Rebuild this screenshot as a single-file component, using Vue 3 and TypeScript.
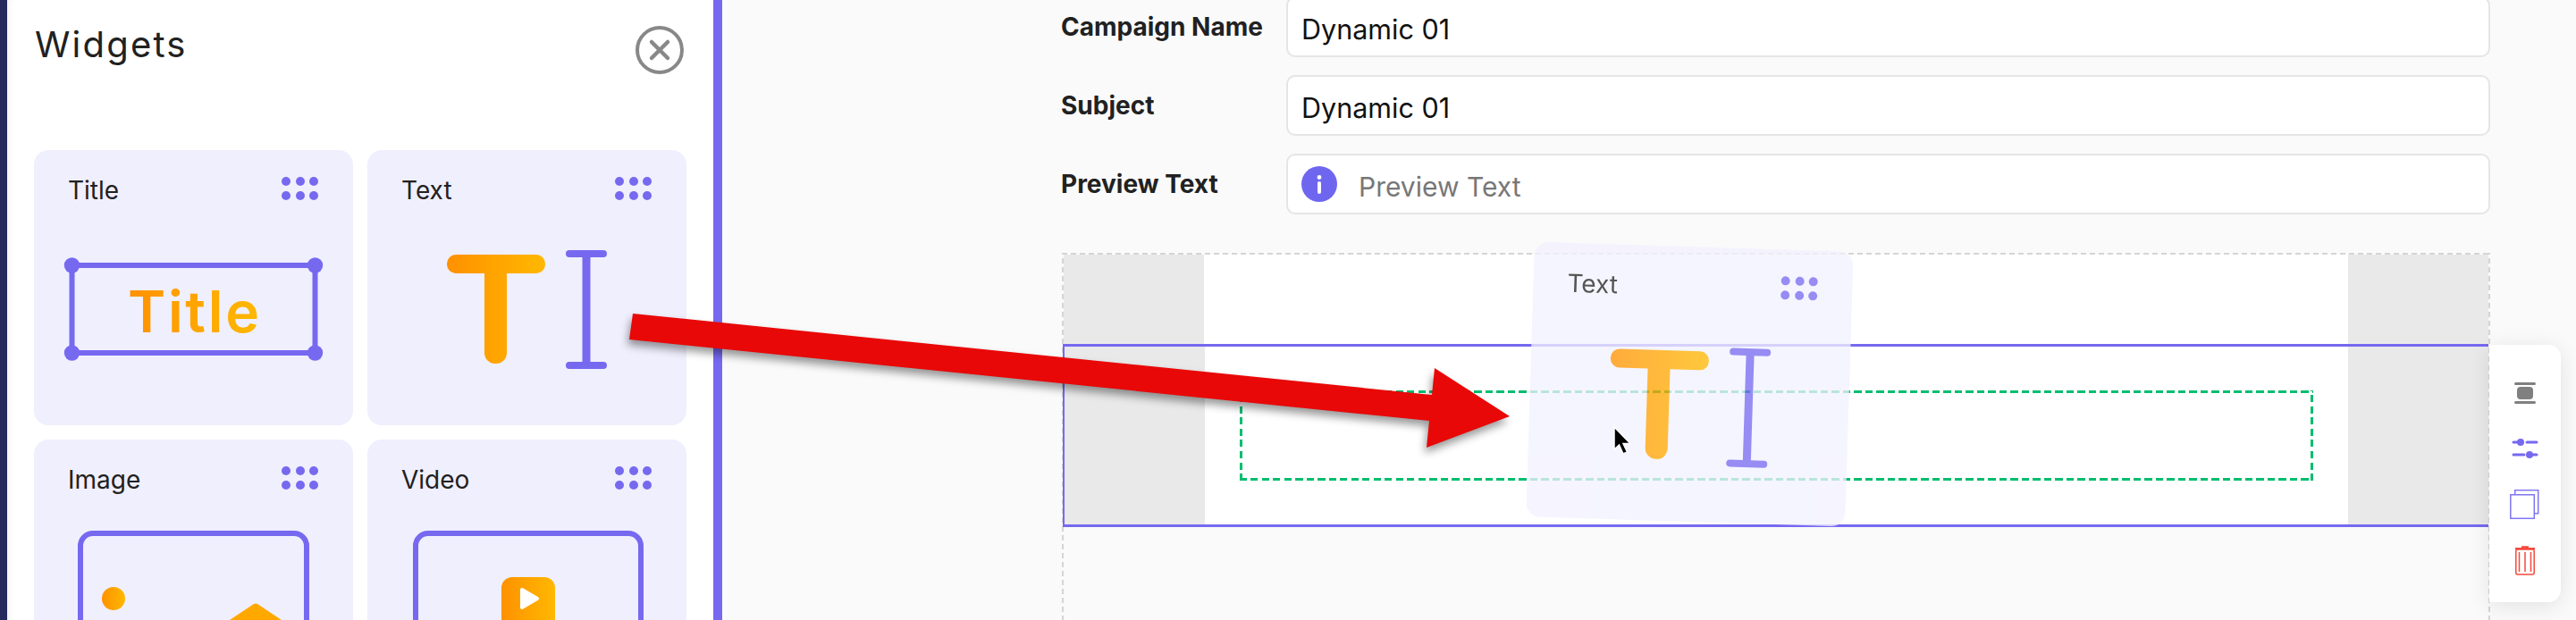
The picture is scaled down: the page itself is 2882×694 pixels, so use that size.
<script setup lang="ts">
interface Widget { name: string; icon: string }
const widgets: Widget[] = [
  { name: 'Title', icon: '#w-title' },
  { name: 'Text', icon: '#w-text' },
  { name: 'Image', icon: '#w-image' },
  { name: 'Video', icon: '#w-video' },
]
const dots = [1, 2, 3, 4, 5, 6]
</script>

<template>
  <div class="page">
    <svg class="defs" width="0" height="0" aria-hidden="true">
      <defs>
        <linearGradient id="orange" x1="0" y1="0" x2="1" y2="0">
          <stop offset="0" stop-color="#ff9100" />
          <stop offset="1" stop-color="#ffb800" />
        </linearGradient>
        <linearGradient id="orange-title" gradientUnits="userSpaceOnUse" x1="105" y1="0" x2="252" y2="0">
          <stop offset="0" stop-color="#ff9100" />
          <stop offset="1" stop-color="#ffb800" />
        </linearGradient>
        <linearGradient id="orange-t" gradientUnits="userSpaceOnUse" x1="89" y1="0" x2="199" y2="0">
          <stop offset="0" stop-color="#ff9100" />
          <stop offset="1" stop-color="#ffb800" />
        </linearGradient>
        <symbol id="w-title" viewBox="0 100 357 208" overflow="visible">
          <rect x="42.500" y="129" width="272" height="98" fill="none" stroke="#7669f0" stroke-width="6" />
          <circle cx="42.500" cy="129" r="8.700" fill="#7669f0" />
          <circle cx="314.500" cy="129" r="8.700" fill="#7669f0" />
          <circle cx="42.500" cy="227" r="8.700" fill="#7669f0" />
          <circle cx="314.500" cy="227" r="8.700" fill="#7669f0" />
          <text x="105" y="204" class="title-art" fill="url(#orange-title)" textLength="147" lengthAdjust="spacing">Title</text>
        </symbol>
        <symbol id="w-text" viewBox="0 100 357 208" overflow="visible">
          <rect x="89" y="117" width="110" height="21" rx="10" fill="url(#orange-t)" />
          <rect x="131" y="117" width="25" height="122" rx="12" fill="url(#orange-t)" />
          <rect x="222" y="112" width="46" height="8" rx="4" fill="#7669f0" />
          <rect x="240.500" y="114" width="9" height="128" fill="#7669f0" />
          <rect x="222" y="237" width="46" height="8" rx="4" fill="#7669f0" />
        </symbol>
        <symbol id="w-image" viewBox="0 100 357 208" overflow="visible">
          <rect x="52" y="105" width="253" height="190" rx="14" fill="none" stroke="#7669f0" stroke-width="6" />
          <circle cx="89" cy="178" r="13" fill="url(#orange)" />
          <path d="M243 186 Q248 181 253 186 L292 212 H204 Z" fill="#ffa800" />
        </symbol>
        <symbol id="w-video" viewBox="0 100 357 208" overflow="visible">
          <rect x="54" y="105" width="252" height="190" rx="14" fill="none" stroke="#7669f0" stroke-width="6" />
          <rect x="150" y="154" width="60" height="60" rx="12" fill="url(#orange)" />
          <path d="M173 168 L190 178 L173 188 Z" fill="#fff" stroke="#fff" stroke-width="4" stroke-linejoin="round" />
        </symbol>
      </defs>
    </svg>

    <div class="rail"></div>

    <aside class="sidebar">
      <header class="sidebar-head">
        <h2>Widgets</h2>
        <svg class="close" viewBox="0 0 54 54" width="54" height="54">
          <circle cx="27" cy="27" r="25" fill="none" stroke="#888" stroke-width="4" />
          <path d="M18 18 L36 36 M36 18 L18 36" stroke="#888" stroke-width="4.500" stroke-linecap="round" />
        </svg>
      </header>
      <div class="grid">
        <article v-for="w in widgets" :key="w.name" class="card">
          <div class="card-head">
            <span>{{ w.name }}</span>
            <div class="dots"><i v-for="d in dots" :key="d"></i></div>
          </div>
          <svg class="art" viewBox="0 100 357 208"><use :href="w.icon" x="0" y="100" width="357" height="208" /></svg>
        </article>
      </div>
    </aside>

    <main class="main">
      <form class="form" @submit.prevent>
        <label class="row">
          <span class="label">Campaign Name</span>
          <span class="field"><input value="Dynamic 01" /></span>
        </label>
        <label class="row">
          <span class="label">Subject</span>
          <span class="field"><input value="Dynamic 01" /></span>
        </label>
        <label class="row">
          <span class="label">Preview Text</span>
          <span class="field">
            <svg class="info" viewBox="0 0 40 40" width="40" height="40">
              <circle cx="20" cy="20" r="20" fill="#6f66f0" />
              <circle cx="20" cy="12.500" r="2.400" fill="#fff" />
              <rect x="18" y="17" width="4" height="14" rx="2" fill="#fff" />
            </svg>
            <input placeholder="Preview Text" />
          </span>
        </label>
      </form>

      <section class="canvas">
        <div class="band">
          <div class="side"></div>
          <div class="mid"></div>
          <div class="side"></div>
        </div>
        <div class="selected">
          <div class="side"></div>
          <div class="mid pad"><div class="drop"></div></div>
          <div class="side"></div>
          <div class="tools">
            <svg class="t1" viewBox="0 0 30 26" width="30" height="26">
              <rect x="3" y="0" width="24" height="3" rx="1.500" fill="#808080" />
              <rect x="6" y="5" width="18" height="14" rx="4" fill="#808080" />
              <rect x="3" y="21" width="24" height="3" rx="1.500" fill="#808080" />
            </svg>
            <svg class="t2" viewBox="0 0 30 26" width="30" height="26">
              <path d="M2 6 H9 M17 6 H28 M2 20 H14 M24 20 H28" stroke="#7669f0" stroke-width="3" stroke-linecap="round" />
              <circle cx="10" cy="6" r="4" fill="#7669f0" />
              <circle cx="20" cy="20" r="4" fill="#7669f0" />
            </svg>
            <svg class="t3" viewBox="0 0 34 34" width="34" height="34">
              <rect x="5.700" y="0.700" width="26" height="26" fill="#fff" stroke="#7f75f2" stroke-width="1.500" />
              <rect x="0.800" y="5.800" width="26.500" height="26.500" fill="#fff" stroke="#7f75f2" stroke-width="1.500" />
            </svg>
            <svg class="t4" viewBox="0 0 24 34" width="24" height="34">
              <path d="M1 3 H23 M8 1.200 H16" stroke="#f44a3f" stroke-width="1.800" />
              <rect x="1.800" y="4" width="20.400" height="28" rx="2" fill="none" stroke="#f44a3f" stroke-width="1.500" />
              <path d="M5.500 7 V29 M12 7 V29 M18.500 7 V29" stroke="#f44a3f" stroke-width="1.500" />
            </svg>
          </div>
        </div>
      </section>
    </main>

    <article class="card ghost">
      <div class="card-head">
        <span>Text</span>
        <div class="dots"><i v-for="d in dots" :key="d"></i></div>
      </div>
      <svg class="art" viewBox="0 100 357 208"><use href="#w-text" x="0" y="100" width="357" height="208" /></svg>
    </article>

    <svg class="overlay" viewBox="0 0 2882 694" width="2882" height="694">
      <polygon class="arrow" points="708,351 1602,442 1605,412 1689,466 1596,501 1599,471 704,380" />
      <path d="M1806 478 V503 L1811.500 498 L1816 508 L1820.500 506 L1816 496.500 L1824 496.500 Z" fill="#000" stroke="#fff" stroke-width="1.500" />
    </svg>
  </div>
</template>

<style>
html, body { margin: 0; background: #fafafa; }
</style>

<style scoped>
.page {
  position: relative;
  display: flex;
  width: 2882px;
  height: 694px;
  overflow: hidden;
  background: #fafafa;
  font-family: Inter, "Liberation Sans", sans-serif;
  color: #212121;
}
.defs { position: absolute; }
.rail { flex: 0 0 8px; background: #252b5c; }
.sidebar {
  flex: 0 0 790px;
  background: #fff;
  border-right: 10px solid #7669f0;
  box-shadow: inset 8px 0 8px -6px rgba(0, 0, 0, 0.05);
}
.sidebar-head {
  display: flex;
  justify-content: space-between;
  align-items: flex-start;
  padding: 29px 33px 0 31px;
  height: 168px;
  box-sizing: border-box;
}
.sidebar-head h2 {
  margin: -2px 0 0;
  font-size: 40px;
  line-height: 46px;
  font-weight: 400;
  letter-spacing: 2.200px;
  font-family: Inter, sans-serif;
}
.grid {
  display: grid;
  grid-template-columns: 357px 357px;
  gap: 16px;
  padding-left: 30px;
}
.card {
  width: 357px;
  height: 308px;
  background: #f0effd;
  border-radius: 16px;
}
.card-head {
  display: flex;
  justify-content: space-between;
  align-items: flex-start;
  height: 100px;
  box-sizing: border-box;
  padding: 25px 39px 0 38px;
  font-size: 28px;
  line-height: 40px;
}
.dots {
  display: grid;
  grid-template-columns: repeat(3, 10px);
  gap: 6px 5.500px;
  margin-top: 5px;
}
.dots i {
  width: 10px;
  height: 10px;
  border-radius: 50%;
  background: #7669f0;
}
.art { display: block; width: 357px; height: 208px; overflow: visible; }
.title-art { font: 600 64px Inter, sans-serif; }
.main {
  flex: 1;
  padding: 0 96px 0 380px;
  min-width: 0;
}
.form {
  display: flex;
  flex-direction: column;
  gap: 20px;
  margin-top: -4px;
}
.row {
  display: grid;
  grid-template-columns: 251px 1fr;
  height: 68px;
}
.label {
  padding-top: 14px;
  margin-left: -1px;
  font-size: 28px;
  line-height: 40px;
  font-weight: 700;
}
.field {
  display: flex;
  align-items: center;
  gap: 24px;
  padding: 0 15px;
  background: #fff;
  border: 2px solid #e5e5e5;
  border-radius: 10px;
}
.field input {
  flex: 1;
  min-width: 0;
  border: 0;
  padding: 4px 0 0;
  outline: 0;
  background: transparent;
  font: 400 30.500px Inter, sans-serif;
  color: #111;
}
.field input::placeholder { color: #777; opacity: 1; font-size: 30px; }
.info { flex: none; }
.canvas {
  margin-top: 43px;
  height: 500px;
  padding: 2px 2px 0;
  background:
    repeating-linear-gradient(90deg, #d5d5d5 0 6px, transparent 6px 10px) top left / 100% 2px no-repeat,
    repeating-linear-gradient(0deg, #d5d5d5 0 6px, transparent 6px 10px) top left / 2px 100% no-repeat,
    repeating-linear-gradient(0deg, #d5d5d5 0 6px, transparent 6px 10px) top right / 2px 100% no-repeat;
}
.band, .selected {
  display: grid;
  grid-template-columns: 157px 1fr 157px;
}
.band { height: 100px; }
.selected {
  position: relative;
  margin-left: -1px;
  border: 3px solid #7669f0;
  border-right: 0;
  border-left-width: 2px;
  height: 199px;
  box-sizing: content-box;
}
.side { background: #e9e9e9; }
.mid { background: #fff; }
.pad { padding: 49px 39px; }
.drop {
  box-sizing: border-box;
  height: 100%;
  background:
    repeating-linear-gradient(90deg, #00bd6f 0 8px, transparent 8px 12.500px) top left / 100% 3px no-repeat,
    repeating-linear-gradient(90deg, #00bd6f 0 8px, transparent 8px 12.500px) bottom left / 100% 3px no-repeat,
    repeating-linear-gradient(0deg, #00bd6f 0 8px, transparent 8px 12.500px) top left / 3px 100% no-repeat,
    repeating-linear-gradient(0deg, #00bd6f 0 8px, transparent 8px 12.500px) top right / 3px 100% no-repeat;
}
.tools {
  position: absolute;
  left: 1594px;
  top: -2px;
  box-sizing: border-box;
  width: 80px;
  height: 288px;
  display: flex;
  flex-direction: column;
  align-items: center;
  padding-top: 42px;
  background: #fff;
  border-radius: 0 14px 14px 0;
  box-shadow: 0 4px 24px rgba(0, 0, 0, 0.1);
}
.t2 { margin-top: 35px; }
.t3 { margin-top: 33px; }
.t4 { margin-top: 29px; }
.ghost {
  position: absolute;
  left: 1712px;
  top: 276px;
  opacity: 0.76;
  background: #f3f2ff;
  transform: rotate(1.8deg);
}
.overlay { position: absolute; left: 0; top: 0; pointer-events: none; }
.arrow { fill: #e80808; filter: drop-shadow(-2px 6px 5px rgba(0, 0, 0, 0.4)); }
</style>
